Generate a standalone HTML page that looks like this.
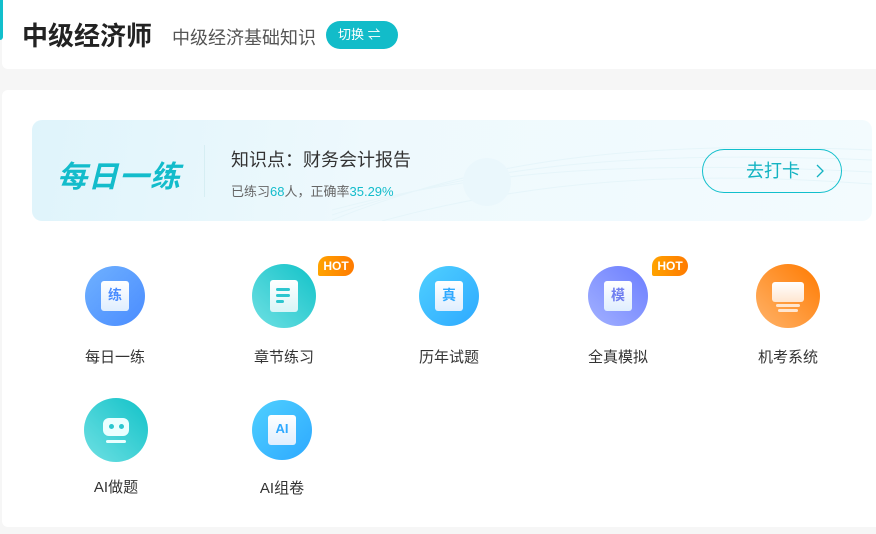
<!DOCTYPE html>
<html><head><meta charset="utf-8"><style>
*{margin:0;padding:0;box-sizing:border-box}
body{width:876px;height:534px;background:#f6f6f6;font-family:"Liberation Sans","Noto Sans CJK SC",sans-serif;position:relative;overflow:hidden}
.top{position:absolute;left:2px;top:0;width:880px;height:69px;background:#fff;border-radius:0 0 6px 6px}
.acc{position:absolute;left:0;top:0;width:3px;height:40px;background:#12bfcc;border-radius:0 0 3px 0}
.t1{position:absolute;left:22px;top:16px;font-size:26px;font-weight:bold;color:#222}
.t2{position:absolute;left:172px;top:24px;font-size:18px;color:#555}
.sw{position:absolute;left:326px;top:21px;width:72px;height:28px;border-radius:14px;background:#12bcc9;color:#fff;font-size:13px;line-height:28px;padding-left:12px}
.main{position:absolute;left:2px;top:90px;width:880px;height:437px;background:#fff;border-radius:6px}
.ban{position:absolute;left:32px;top:120px;width:840px;height:101px;border-radius:10px;background:linear-gradient(100deg,#dff4fb 0%,#eef9fd 40%,#f3fbfe 100%);overflow:hidden}
.logo{position:absolute;left:25px;top:32px;font-size:30px;font-weight:bold;font-style:italic;color:#13bccb;letter-spacing:1px}
.div{position:absolute;left:172px;top:25px;width:1px;height:52px;background:#d6eef3}
.k1{position:absolute;left:199px;top:26px;font-size:18px;color:#333}
.k2{position:absolute;left:199px;top:61px;font-size:13px;color:#666}
.k2 b{font-weight:normal;color:#13bccb}
.go{position:absolute;left:670px;top:29px;width:140px;height:44px;border:1px solid #12bfcc;border-radius:22px;color:#13b3c2;font-size:18px;line-height:42px;padding-left:43px}
.it{position:absolute;width:120px;text-align:center;font-size:15px;color:#333}
.ic{width:60px;height:60px;border-radius:50%;margin:0 auto 20px;position:relative}
.hot{position:absolute;top:-10px;left:94px;width:36px;height:20px;border-radius:10px 10px 10px 2px;background:linear-gradient(90deg,#ffa300,#ff7a00);color:#fff;font-size:12px;font-weight:bold;line-height:20px;text-align:center}
.pg{position:absolute;left:16px;top:15px;width:28px;height:30px;background:linear-gradient(#fff,#dfeefe);border-radius:3px;font-size:14px;font-weight:bold;text-align:center;line-height:28px}
</style></head><body>
<div class="top"></div><div class="acc"></div>
<div class="t1">中级经济师</div>
<div class="t2">中级经济基础知识</div>
<div class="sw">切换 ⇌</div>
<div class="main"></div>
<div class="ban">
<svg style="position:absolute;left:300px;top:0" width="540" height="101"><g fill="none" stroke="#e6f5fa" stroke-width="1"><path d="M0 100 C150 40 300 20 540 30"/><path d="M0 95 C150 45 300 30 540 40"/><path d="M0 90 C150 50 300 40 540 52"/><path d="M50 101 C200 60 350 50 540 64"/></g><circle cx="155" cy="62" r="24" fill="#eaf7fc"/></svg>
<div class="logo">每日一练</div>
<div class="div"></div>
<div class="k1">知识点：财务会计报告</div>
<div class="k2">已练习<b>68</b>人，正确率<b>35.29%</b></div>
<div class="go">去打卡 <svg width="10" height="14" style="margin-left:10px;vertical-align:-1px"><path d="M2 1 L8 7 L2 13" fill="none" stroke="#13b3c2" stroke-width="1.3"/></svg></div>
</div>

<div class="it" style="left:55px;top:266px"><div class="ic" style="background:linear-gradient(135deg,#6fb1ff,#4a8cff)"><div class="pg" style="color:#4a8cff">练</div></div>每日一练</div>
<div class="it" style="left:224px;top:266px"><div class="ic" style="width:64px;height:64px;margin-top:-2px;margin-bottom:18px;background:linear-gradient(225deg,#12c2c8,#6fe0e3)"><div class="pg" style="left:18px;top:16px;width:28px;height:32px;background:linear-gradient(#fff,#d8f5f7)"><div style="position:absolute;left:6px;top:8px;width:14px;height:3px;background:#2cc6cf;border-radius:2px;box-shadow:0 6px 0 #2cc6cf"></div><div style="position:absolute;left:6px;top:20px;width:8px;height:3px;background:#2cc6cf;border-radius:2px"></div></div></div>章节练习<div class="hot">HOT</div></div>
<div class="it" style="left:389px;top:266px"><div class="ic" style="background:linear-gradient(135deg,#4fd0ff,#2ea9ff)"><div class="pg" style="color:#2ea9ff">真</div></div>历年试题</div>
<div class="it" style="left:558px;top:266px"><div class="ic" style="background:linear-gradient(225deg,#6b7dff,#a2b1ff)"><div class="pg" style="color:#7180f0">模</div></div>全真模拟<div class="hot">HOT</div></div>
<div class="it" style="left:728px;top:266px"><div class="ic" style="width:64px;height:64px;margin-top:-2px;margin-bottom:18px;background:linear-gradient(225deg,#ff7a00,#ffb36a)"><div style="position:absolute;left:16px;top:18px;width:32px;height:20px;border-radius:3px;background:linear-gradient(#fff,#ffe6d0)"></div><div style="position:absolute;left:20px;top:40px;width:24px;height:3px;background:#ffe6d0;border-radius:2px"></div><div style="position:absolute;left:22px;top:45px;width:20px;height:3px;background:#ffe6d0;border-radius:2px"></div></div>机考系统</div>

<div class="it" style="left:56px;top:398px"><div class="ic" style="width:64px;height:64px;margin-bottom:14px;background:linear-gradient(225deg,#12c2c8,#6fe0e3)"><div style="position:absolute;left:19px;top:20px;width:26px;height:18px;border-radius:6px;background:#eaffff"><div style="position:absolute;left:6px;top:6px;width:5px;height:5px;border-radius:50%;background:#2cc6cf;box-shadow:10px 0 0 #2cc6cf"></div></div><div style="position:absolute;left:22px;top:42px;width:20px;height:3px;background:#eaffff;border-radius:2px"></div></div>AI做题</div>
<div class="it" style="left:222px;top:400px"><div class="ic" style="margin-bottom:17px;background:linear-gradient(135deg,#4fd0ff,#2ea9ff)"><div class="pg" style="color:#2ea9ff;font-size:13px">AI</div></div>AI组卷</div>
</body></html>
